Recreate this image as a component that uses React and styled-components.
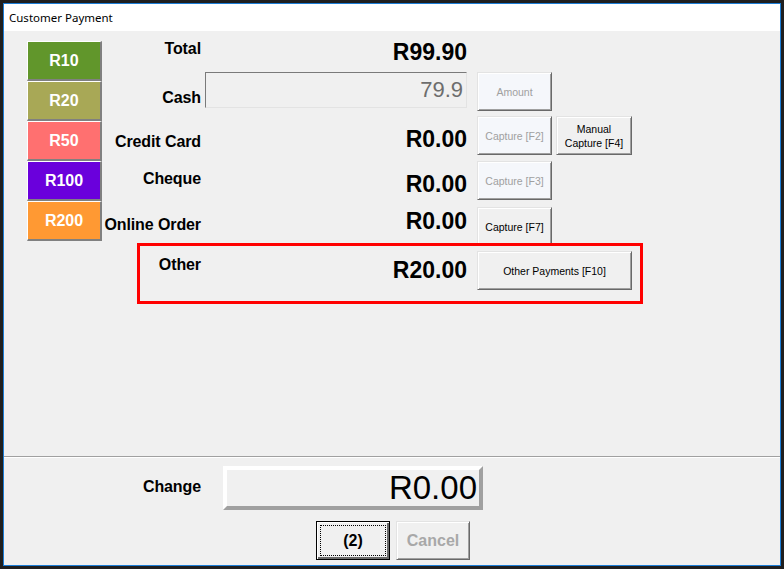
import React from "react";
import styled, { createGlobalStyle } from "styled-components";

const GlobalStyle = createGlobalStyle`
    html, body {
        margin: 0;
        padding: 0;
        background: #1f1f1f;
    }
    body {
        width: 784px;
        height: 569px;
        overflow: hidden;
        font-family: "Liberation Sans", Arial, sans-serif;
    }
`

const Window = styled.div`
    width: 778px;
    height: 563px;
    margin: 3px;
    box-sizing: border-box;
    border: 1px solid #1c7dd6;
    background: #f0f0f0;
    display: flex;
    flex-direction: column;
`

const TitleBar = styled.div`
    height: 27px;
    flex-shrink: 0;
    background: #fff;
    display: flex;
    align-items: center;
    padding-left: 5px;
    font-family: "Noto Sans", "Open Sans", sans-serif;
    font-size: 11.5px;
    color: #000;
`

const TopPanel = styled.div`
    height: 425px;
    flex-shrink: 0;
    box-sizing: border-box;
    padding: 10px 0 0 23px;
    display: flex;
    align-items: flex-start;
`

const Separator = styled.div`
    border-top: 1px solid #a0a0a0;
    border-bottom: 1px solid #fff;
`

const BottomPanel = styled.div`
    flex: 1;
    padding-top: 8px;
    display: flex;
    flex-direction: column;
`

const DenomColumn = styled.div`
    width: 75px;
    display: flex;
    flex-direction: column;
    flex-shrink: 0;
`

const DenomButton = styled.button`
    height: 40px;
    margin: 0;
    padding: 0;
    box-sizing: border-box;
    background: ${props => props.$bg};
    border-style: solid;
    border-width: 1px 2px 2px 1px;
    border-color: #fff #808080 #808080 #fff;
    color: #fff;
    font-family: "Liberation Sans", Arial, sans-serif;
    font-weight: bold;
    font-size: 16px;
`

const Main = styled.div`
    display: flex;
    flex-direction: column;
`

const Row = styled.div`
    display: flex;
    align-items: flex-start;
    height: ${props => props.$h}px;
`

const Label = styled.div`
    width: ${props => props.$w || 99}px;
    flex-shrink: 0;
    box-sizing: border-box;
    padding-top: ${props => props.$top || 0}px;
    text-align: right;
    font-weight: bold;
    font-size: 16px;
    line-height: 16px;
    letter-spacing: -0.1px;
    color: #000;
    white-space: nowrap;
`

const Amount = styled.div`
    width: 262px;
    margin-left: 4px;
    flex-shrink: 0;
    padding-top: ${props => props.$top || 0}px;
    text-align: right;
    font-weight: bold;
    font-size: 23px;
    line-height: 23px;
    color: #000;
`

const CashInput = styled.input`
    width: 262px;
    height: 36px;
    margin: 0 0 0 4px;
    box-sizing: border-box;
    border-style: solid;
    border-width: 1px;
    border-color: #7a7a7a #e3e3e3 #e3e3e3 #7a7a7a;
    background: #f0f0f0;
    padding: 0 3px;
    text-align: right;
    font-family: "Liberation Sans", Arial, sans-serif;
    font-size: 22px;
    color: #6d6d6d;
`

const ActionButton = styled.button`
    width: ${props => props.$w || 75}px;
    height: 39px;
    margin: ${props => props.$mt || 0}px 0 0 ${props => props.$ml || 0}px;
    padding: 0 2px;
    flex-shrink: 0;
    box-sizing: border-box;
    border: 1px solid;
    border-color: #e3e3e3 #696969 #696969 #e3e3e3;
    box-shadow: inset 1px 1px 0 #fff, inset -1px -1px 0 #a0a0a0;
    background: ${props => props.disabled ? "#f5f7fb" : "#f0f0f0"};
    color: ${props => props.disabled ? "#a0a0a0" : "#000"};
    font-family: "Liberation Sans", Arial, sans-serif;
    font-size: 10.5px;
    line-height: 14px;
`

const OtherBox = styled.div`
    width: 506px;
    height: 61px;
    margin-left: 35px;
    box-sizing: border-box;
    border: 3px solid #f00;
    display: flex;
    align-items: flex-start;
`

const ChangeRow = styled.div`
    display: flex;
    align-items: flex-start;
`

const ChangeBox = styled.div`
    width: 260px;
    height: 44px;
    margin-left: 22px;
    box-sizing: border-box;
    border: 4px solid;
    border-color: #fff #a0a0a0 #a0a0a0 #fff;
    background: #f0f0f0;
    display: flex;
    align-items: center;
    justify-content: flex-end;
    padding-right: 2px;
    font-size: 33px;
    color: #000;
`

const ButtonRow = styled.div`
    display: flex;
    justify-content: center;
    gap: 6px;
    margin-top: 11px;
    padding-left: 2px;
`

const DialogButton = styled.button`
    width: 74px;
    height: 39px;
    margin: 0;
    padding: 0;
    box-sizing: border-box;
    border: 1px solid;
    border-color: ${props => props.$primary ? "#000" : "#e3e3e3 #696969 #696969 #e3e3e3"};
    box-shadow: ${props => props.$primary
        ? "inset 1px 1px 0 #fff, inset -2px -2px 0 #696969"
        : "inset 1px 1px 0 #fff, inset -1px -1px 0 #a0a0a0"};
    outline: ${props => props.$primary ? "1px dotted #000" : "none"};
    outline-offset: -5px;
    background: #f0f0f0;
    color: ${props => props.disabled ? "#a8a8a8" : "#000"};
    font-family: "Liberation Sans", Arial, sans-serif;
    font-weight: bold;
    font-size: 16px;
`

const denominations = [
    {label: "R10", color: "#61962b"},
    {label: "R20", color: "#a8a856"},
    {label: "R50", color: "#ff7070"},
    {label: "R100", color: "#6a00dc"},
    {label: "R200", color: "#ff9933"},
]

function App() {
    return (
        <>
            <GlobalStyle />
            <Window>
                <TitleBar>Customer Payment</TitleBar>
                <TopPanel>
                    <DenomColumn>
                        {denominations.map(d => (
                            <DenomButton key={d.label} $bg={d.color}>{d.label}</DenomButton>
                        ))}
                    </DenomColumn>
                    <Main>
                        <Row $h={31}>
                            <Label $top={0}>Total</Label>
                            <Amount $top={0}>R99.90</Amount>
                        </Row>
                        <Row $h={44}>
                            <Label $top={18}>Cash</Label>
                            <CashInput readOnly value="79.9" />
                            <ActionButton $ml={10} disabled>Amount</ActionButton>
                        </Row>
                        <Row $h={45}>
                            <Label $top={18}>Credit Card</Label>
                            <Amount $top={12}>R0.00</Amount>
                            <ActionButton $ml={10} disabled>Capture [F2]</ActionButton>
                            <ActionButton $ml={4} $w={76}>Manual<br />Capture [F4]</ActionButton>
                        </Row>
                        <Row $h={46}>
                            <Label $top={10}>Cheque</Label>
                            <Amount $top={12}>R0.00</Amount>
                            <ActionButton $ml={10} disabled>Capture [F3]</ActionButton>
                        </Row>
                        <Row $h={36}>
                            <Label $top={10}>Online Order</Label>
                            <Amount $top={3}>R0.00</Amount>
                            <ActionButton $ml={10}>Capture [F7]</ActionButton>
                        </Row>
                        <OtherBox>
                            <Label $w={61} $top={11}>Other</Label>
                            <Amount $top={13}>R20.00</Amount>
                            <ActionButton $ml={10} $mt={5} $w={155}>Other Payments [F10]</ActionButton>
                        </OtherBox>
                    </Main>
                </TopPanel>
                <Separator />
                <BottomPanel>
                    <ChangeRow>
                        <Label $w={197} $top={13}>Change</Label>
                        <ChangeBox>R0.00</ChangeBox>
                    </ChangeRow>
                    <ButtonRow>
                        <DialogButton $primary>(2)</DialogButton>
                        <DialogButton disabled>Cancel</DialogButton>
                    </ButtonRow>
                </BottomPanel>
            </Window>
        </>
    )
}

export default App;
